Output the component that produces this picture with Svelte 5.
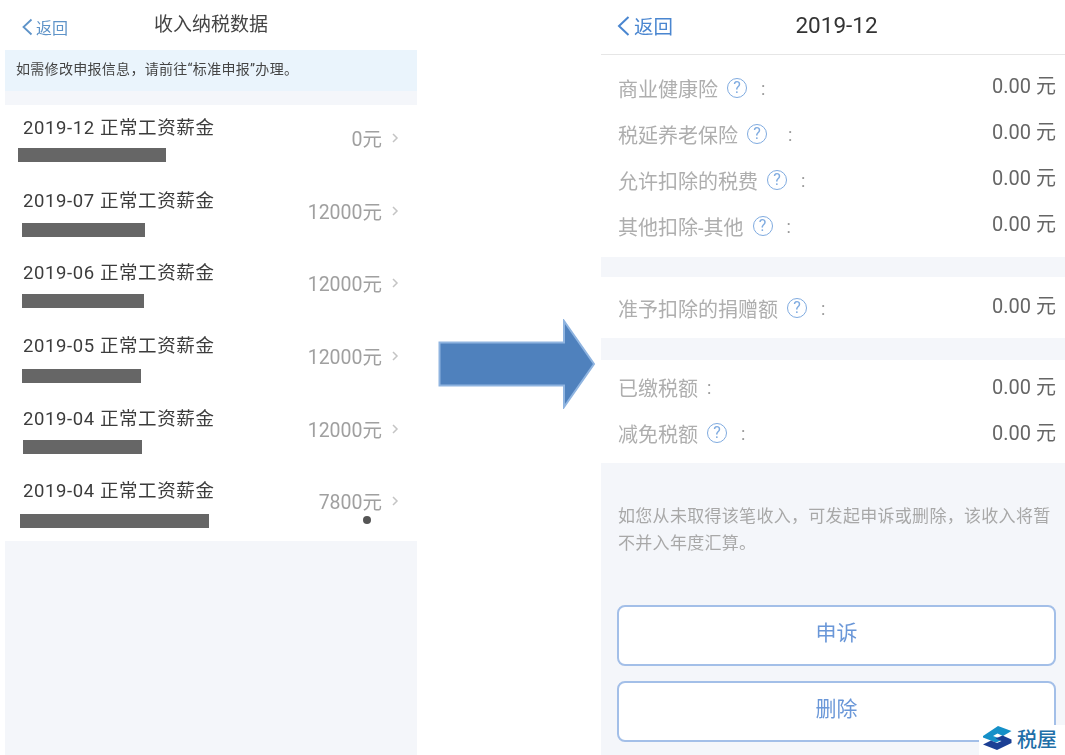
<script>
  const incomes = [
    { month: '2019-12', amount: '0元', barLeft: 13, barWidth: 148, barTop: 8 },
    { month: '2019-07', amount: '12000元', barLeft: 17, barWidth: 123, barTop: 10 },
    { month: '2019-06', amount: '12000元', barLeft: 17, barWidth: 122, barTop: 9 },
    { month: '2019-05', amount: '12000元', barLeft: 17, barWidth: 119, barTop: 11 },
    { month: '2019-04', amount: '12000元', barLeft: 18, barWidth: 119, barTop: 9 },
    { month: '2019-04', amount: '7800元', barLeft: 15, barWidth: 189, barTop: 11, dot: true }
  ];

  const deductions = [
    [
      { label: '商业健康险', help: true, gap: 14 },
      { label: '税延养老保险', help: true, gap: 21 },
      { label: '允许扣除的税费', help: true, gap: 14 },
      { label: '其他扣除-其他', help: true, gap: 14 }
    ],
    [{ label: '准予扣除的捐赠额', help: true, gap: 14 }],
    [
      { label: '已缴税额', help: false, gap: 0 },
      { label: '减免税额', help: true, gap: 14 }
    ]
  ];
</script>

<div class="page">
  <section class="left">
    <header class="left-head">
      <span class="back">
        <svg width="12" height="18" viewBox="0 0 12 18"><path d="M10.500 1.500 2.500 9l8 7.500" fill="none" stroke="#5e93c8" stroke-width="1.8" /></svg>
        返回
      </span>
      <h1>收入纳税数据</h1>
    </header>
    <div class="notice">如需修改申报信息，请前往“标准申报”办理。</div>
    <ul class="income-list">
      {#each incomes as item}
        <li class="income">
          <div class="income-main">
            <div class="income-title">{item.month} 正常工资薪金</div>
            <div class="bar" style="margin-left: {item.barLeft}px; width: {item.barWidth}px; margin-top: {item.barTop}px"></div>
          </div>
          <div class="amount">{item.amount}</div>
          <svg class="chevron" width="8" height="12" viewBox="0 0 8 12"><path d="M2 2l4 4-4 4" fill="none" stroke="#c4c4c4" stroke-width="1.5" /></svg>
          {#if item.dot}<span class="dot"></span>{/if}
        </li>
      {/each}
    </ul>
  </section>

  <div class="arrow-col">
    <svg width="158" height="90" viewBox="0 0 158 90">
      <path d="M1.500 23.500H126V2l30 43-30 43V66.500H1.500Z" fill="#4f81bd" stroke="#8fb4e0" stroke-width="2" />
    </svg>
  </div>

  <section class="right">
    <header class="right-head">
      <span class="back-big">
        <svg width="13" height="22" viewBox="0 0 13 22"><path d="M11.500 2 2 11l9.500 9" fill="none" stroke="#4a86d0" stroke-width="2" /></svg>
        返回
      </span>
      <h2>2019-12</h2>
    </header>

    {#each deductions as group, i}
      <div class="group g{i}">
        {#each group as row}
          <div class="row">
            <span class="label">{row.label}</span>
            {#if row.help}
              <span class="help" style="margin-right: {row.gap}px">?</span>
            {:else}
              <span class="no-help"></span>
            {/if}
            <span class="colon">:</span>
            <span class="value">0.00 元</span>
          </div>
        {/each}
      </div>
    {/each}

    <p class="hint">如您从未取得该笔收入，可发起申诉或删除，该收入将暂不并入年度汇算。</p>

    <button class="action first">申诉</button>
    <button class="action">删除</button>
  </section>

  <div class="watermark">
    <svg width="29" height="24" viewBox="0 0 29 24">
      <path d="M15 0 28.500 5 20 10 14.500 7.500 10 10 20 13.500 13 16.500 0 11.500V10Z" fill="#1590c8" />
      <path d="M28.500 13.500V17L14 24 0 18.500 8 14.500 14 17 18.500 15 12.500 12.500 19.500 9.500Z" fill="#1b3f94" />
    </svg>
    <span>税屋</span>
  </div>
</div>

<style>
  :global(body) {
    margin: 0;
    background: #fff;
  }

  .page {
    position: relative;
    display: flex;
    width: 1065px;
    height: 755px;
    overflow: hidden;
    font-family: Roboto, "Noto Sans CJK SC", sans-serif;
  }

  .left {
    width: 412px;
    margin-left: 5px;
    background: #f4f6fa;
    filter: blur(0.5px);
  }

  .left-head {
    position: relative;
    height: 50px;
    display: flex;
    align-items: center;
    justify-content: center;
    background: #fff;
  }

  .left-head h1 {
    margin: 0 0 5px;
    font-size: 19px;
    font-weight: 400;
    color: #444;
  }

  .back {
    position: absolute;
    left: 16px;
    top: 15px;
    display: flex;
    align-items: center;
    gap: 3px;
    font-size: 16px;
    color: #5e93c8;
  }

  .notice {
    height: 41px;
    padding-left: 11px;
    line-height: 38px;
    font-size: 14px;
    letter-spacing: 0.3px;
    color: #444;
    background: #eaf4fc;
  }

  .income-list {
    margin: 14px 0 0;
    padding: 0;
    list-style: none;
    background: #fff;
  }

  .income {
    position: relative;
    height: 72.67px;
    box-sizing: border-box;
    display: flex;
    padding-right: 18px;
  }

  .income-main {
    flex: 1;
    padding-top: 11px;
  }

  .income-title {
    margin-left: 18px;
    height: 24px;
    line-height: 24px;
    font-size: 18.500px;
    letter-spacing: 0.6px;
    color: #3c3c3c;
  }

  .bar {
    height: 14px;
    background: #666;
  }

  .amount {
    margin-top: 23px;
    height: 24px;
    line-height: 24px;
    font-size: 19.500px;
    color: #a0a0a0;
  }

  .chevron {
    margin: 27px 0 0 9px;
  }

  .dot {
    position: absolute;
    left: 358px;
    top: 48px;
    width: 8px;
    height: 8px;
    border-radius: 50%;
    background: #555;
  }

  .arrow-col {
    width: 184px;
    padding: 319px 0 0 21px;
    box-sizing: border-box;
    filter: blur(0.4px);
  }

  .right {
    width: 464px;
    background: #f4f6fa;
    filter: blur(0.5px);
  }

  .right-head {
    position: relative;
    height: 54px;
    display: flex;
    align-items: center;
    justify-content: center;
    padding: 0 9px 0 16px;
    background: #fff;
    border-bottom: 1px solid #e6e6e6;
  }

  .right-head h2 {
    margin: 0 0 4px;
    font-size: 22.500px;
    font-weight: 400;
    color: #333;
  }

  .back-big {
    position: absolute;
    left: 16px;
    top: 11px;
    display: flex;
    align-items: center;
    gap: 4px;
    font-size: 19.500px;
    color: #4a86d0;
  }

  .group {
    padding: 8px 9px 7px 17px;
    margin-bottom: 20px;
    background: #fff;
  }

  .group.g0 {
    padding-top: 10px;
    padding-bottom: 8px;
  }

  .group.g1 {
    margin-bottom: 22px;
  }

  .group.g2 {
    padding-top: 4px;
  }

  .row {
    height: 46px;
    display: flex;
    align-items: center;
    font-size: 20px;
    color: #aeaeae;
  }

  .help {
    width: 18px;
    height: 18px;
    margin-left: 9px;
    border: 1.500px solid #7fabe0;
    border-radius: 50%;
    text-align: center;
    line-height: 18px;
    font-size: 16px;
    color: #7fabe0;
  }

  .no-help {
    width: 9px;
  }

  .colon {
    font-size: 18px;
    color: #999;
  }

  .value {
    margin-left: auto;
    margin-top: -7px;
    font-size: 20px;
    color: #666;
  }

  .g2 .value {
    margin-top: -3px;
  }

  .hint {
    margin: 0 9px 0 17px;
    padding-top: 20px;
    font-size: 17px;
    letter-spacing: 0.3px;
    line-height: 27px;
    color: #a8a8a8;
  }

  .action {
    display: block;
    width: 439px;
    height: 61px;
    margin: 15px 9px 0 16px;
    padding-bottom: 10px;
    background: #fff;
    border: 2px solid #a3bfe8;
    border-radius: 8px;
    font: inherit;
    font-size: 21px;
    color: #6a97d8;
  }

  .action.first {
    margin-top: 48px;
  }

  .watermark {
    position: absolute;
    right: 0;
    bottom: 0;
    width: 86px;
    height: 30px;
    display: flex;
    align-items: center;
    gap: 5px;
    padding: 0 0 4px 4px;
    box-sizing: border-box;
    background: #fff;
    font-size: 20px;
    font-weight: 500;
    color: #1f6fa8;
  }
</style>
